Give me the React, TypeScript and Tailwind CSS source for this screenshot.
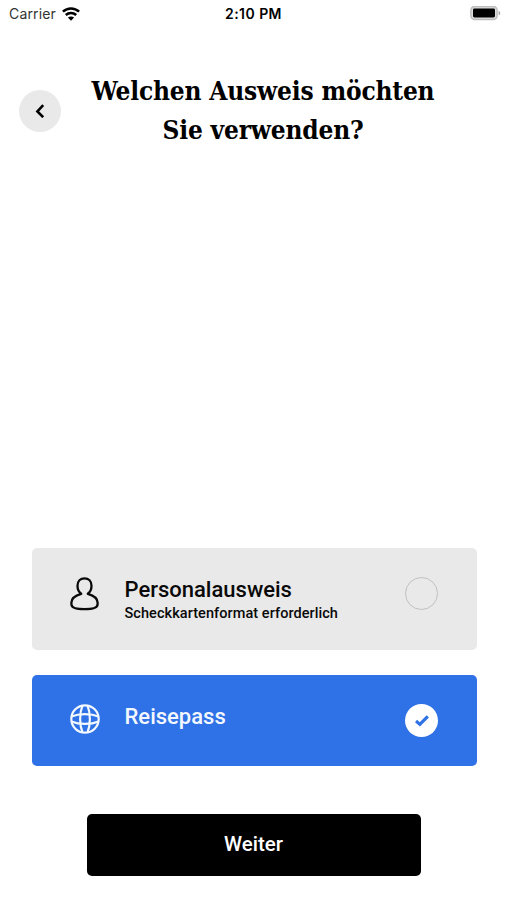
import { useState } from 'react'
import clsx from 'clsx'

function WifiIcon() {
  return (
    <svg width="18" height="14" viewBox="0 0 18 14" fill="none" stroke="#000" strokeWidth="2.5">
      <path d="M.9 4.7C5.5.4 12.5.4 17.1 4.7" />
      <path d="M3.8 8C6.8 5.2 11.2 5.2 14.2 8" />
      <path d="M9 13.8 5.9 10.5C7.7 9 10.3 9 12.1 10.5Z" fill="#000" stroke="none" />
    </svg>
  )
}

function BatteryIcon() {
  return (
    <svg width="31" height="15" viewBox="0 0 31 15">
      <rect x="0.9" y="0.4" width="26.2" height="13.2" rx="3.8" fill="#dcdcdc" stroke="#bdbdbd" strokeWidth="1.5" />
      <rect x="3" y="2.5" width="22" height="9" rx="1.4" fill="#000" />
      <path d="M28.6 4.9c2.2.6 2.2 3.8 0 4.4Z" fill="#a3a3a3" />
    </svg>
  )
}

function PersonIcon() {
  return (
    <svg width="30" height="34" viewBox="0 0 30 34" fill="none" stroke="#0a0a0a" strokeWidth="2.3" strokeLinejoin="round">
      <path d="M11.2 16.8C8.7 15 7.5 12 7.5 8.8C7.5 4.2 10.4 1.4 14.5 1.4S21.5 4.2 21.5 8.8C21.5 12 20.3 15 17.8 16.8C23.6 18.4 27.6 21.2 27.6 25.6V27.2C27.6 30.8 21.5 32.2 14.5 32.2S1.4 30.8 1.4 27.2V25.6C1.4 21.2 5.4 18.4 11.2 16.8Z" />
    </svg>
  )
}

function GlobeIcon() {
  return (
    <svg width="30" height="30" viewBox="0 0 30 30" fill="none" stroke="#f3f8ff" strokeWidth="2.2">
      <circle cx="15" cy="15" r="13.7" />
      <path d="M12.6 1.4C9.3 9 9.3 21 12.6 28.6M17.4 1.4C20.7 9 20.7 21 17.4 28.6" />
      <path d="M1.4 12.6C9 9.3 21 9.3 28.6 12.6M1.4 17.4C9 20.7 21 20.7 28.6 17.4" />
    </svg>
  )
}

function RadioMark({ checked }: { checked: boolean }) {
  if (!checked) return <span className="block size-[33px] rounded-full border-[1.5px] border-[#c0c0c0]" />
  return (
    <span className="flex size-[33px] items-center justify-center rounded-full bg-white">
      <svg width="14" height="12" viewBox="0 0 14 12" fill="none" stroke="#2f71e6" strokeWidth="3.2">
        <path d="M1 6 4.9 9.4 12.8 1.4" />
      </svg>
    </span>
  )
}

export default function App() {
  const [selected, setSelected] = useState('pass')

  return (
    <main className="flex h-[900px] w-[507px] flex-col overflow-hidden bg-white font-['Roboto',sans-serif] text-black">
      {/* Status bar */}
      <div className="grid h-[27px] grid-cols-3 items-center pl-[9px] pr-[6px] font-['Inter',sans-serif]">
        <div className="flex items-center gap-[6px] text-[#333]">
          <span className="text-[14px] leading-5 tracking-[0.15px]">Carrier</span>
          <WifiIcon />
        </div>
        <span className="-ml-[3px] text-center text-[14px] font-semibold leading-5 tracking-[0.45px]">2:10 PM</span>
        <div className="flex justify-end">
          <BatteryIcon />
        </div>
      </div>

      <header className="mt-[44px] flex items-start">
        <button aria-label="Zurück" className="ml-[19px] mt-[19px] flex size-[42px] items-center justify-center rounded-full bg-[#e9e9e9]">
          <svg width="10" height="14" viewBox="0 0 10 14" fill="none" stroke="#000" strokeWidth="2.6">
            <path d="M8.2 1.2 2.4 7.4l5.8 5.8" />
          </svg>
        </button>
        <h1 className="ml-[20px] w-[364px] whitespace-nowrap pt-px text-center font-['DejaVu_Serif_Condensed','DejaVu_Serif',serif] text-[26px] font-bold leading-[39px] tracking-[-0.18px]">
          Welchen Ausweis möchten
          <br />
          Sie verwenden?
        </h1>
      </header>

      {/* Document options */}
      <section className="mt-auto flex flex-col gap-[25px] pl-[31.5px] pr-[30.5px]">
        <button
          onClick={() => setSelected('id')}
          className={clsx(
            'flex h-[102px] items-start rounded-[5px] pl-[38.5px] pr-[38.5px] text-left',
            selected === 'id' ? 'bg-[#2f71e6] text-white' : 'bg-[#e9e9e9] text-[#0a0a0a]',
          )}
        >
          <span className="mt-[29px] w-[54.5px]">
            <PersonIcon />
          </span>
          <span className="mt-[28px] flex flex-1 flex-col font-medium">
            <span className="text-[22px] leading-[28px]">Personalausweis</span>
            <span className="text-[14.5px] leading-[20px] tracking-[0.06px]">Scheckkartenformat erforderlich</span>
          </span>
          <span className="mt-[29px]">
            <RadioMark checked={selected === 'id'} />
          </span>
        </button>

        <button
          onClick={() => setSelected('pass')}
          className={clsx(
            'flex h-[91px] items-start rounded-[5px] pl-[38.5px] pr-[38.5px] text-left',
            selected === 'pass' ? 'bg-[#2f71e6] text-[#f3f8ff]' : 'bg-[#e9e9e9] text-[#0a0a0a]',
          )}
        >
          <span className="mt-[29px] w-[54.5px]">
            <GlobeIcon />
          </span>
          <span className="mt-[28px] flex-1 text-[22px] font-medium leading-[28px]">Reisepass</span>
          <span className="mt-[29px]">
            <RadioMark checked={selected === 'pass'} />
          </span>
        </button>
      </section>

      <button className="mx-auto mb-[24px] mt-[48px] h-[62px] w-[334px] rounded-[5px] bg-black pb-[2px] text-[20.5px] font-medium text-white">
        Weiter
      </button>
    </main>
  )
}
